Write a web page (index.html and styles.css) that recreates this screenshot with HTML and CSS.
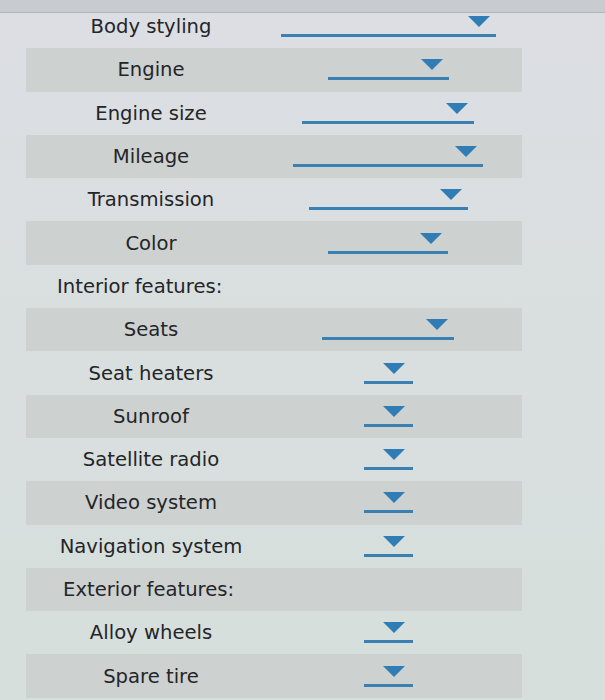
FILE: index.html
```html
<!DOCTYPE html>
<html lang="en">
<head>
<meta charset="utf-8">
<title>Vehicle features</title>
<link rel="stylesheet" href="styles.css">
</head>
<body>
<div class="page">
  <div class="list">
    <div class="row"><span class="label">Body styling</span><span class="select w-body"></span></div>
    <div class="row alt"><span class="label">Engine</span><span class="select w-engine"></span></div>
    <div class="row"><span class="label">Engine size</span><span class="select w-size"></span></div>
    <div class="row alt"><span class="label">Mileage</span><span class="select w-mileage"></span></div>
    <div class="row"><span class="label">Transmission</span><span class="select w-trans"></span></div>
    <div class="row alt"><span class="label">Color</span><span class="select w-color"></span></div>
    <div class="row"><span class="label head">Interior features:</span></div>
    <div class="row alt"><span class="label">Seats</span><span class="select w-seats"></span></div>
    <div class="row"><span class="label">Seat heaters</span><span class="select small"></span></div>
    <div class="row alt"><span class="label">Sunroof</span><span class="select small"></span></div>
    <div class="row"><span class="label">Satellite radio</span><span class="select small"></span></div>
    <div class="row alt"><span class="label">Video system</span><span class="select small"></span></div>
    <div class="row"><span class="label">Navigation system</span><span class="select small"></span></div>
    <div class="row alt"><span class="label head ext">Exterior features:</span></div>
    <div class="row"><span class="label">Alloy wheels</span><span class="select small"></span></div>
    <div class="row alt"><span class="label">Spare tire</span><span class="select small"></span></div>
  </div>
</div>
</body>
</html>
```
FILE: styles.css
```css
html, body {
  margin: 0;
  padding: 0;
}

body {
  width: 605px;
  height: 700px;
  overflow: hidden;
  font-family: "DejaVu Sans", Verdana, sans-serif;
  color: #242528;
}

.page {
  height: 700px;
  background:
    linear-gradient(#c8cbd0 0, #c8cbd0 12px, #b3b6ba 12px, #b3b6ba 13px, transparent 13px),
    linear-gradient(#dcdee3, #d9dfdf 50%, #d6dfdc);
}

.list {
  padding-top: 5px;
}

.row {
  display: grid;
  grid-template-columns: 250px 224px 1fr;
  align-items: center;
  width: 496px;
  height: 43.3px;
  margin-left: 26px;
}

.row.alt {
  background: #cdd1d0;
}

.label {
  font-size: 19.6px;
  text-align: center;
  white-space: nowrap;
}

.label.head {
  text-align: left;
  padding-left: 31px;
}

.label.ext {
  padding-left: 37px;
}

.select {
  justify-self: center;
  display: flex;
  justify-content: flex-end;
  align-items: flex-start;
  height: 18px;
  padding-right: 6px;
  border-bottom: 3px solid #3a80b3;
  box-sizing: content-box;
}

.select::after {
  content: "";
  width: 0;
  height: 0;
  border-left: 11.5px solid transparent;
  border-right: 11.5px solid transparent;
  border-top: 11px solid #2f7db4;
}

.w-body { width: 209px; }
.w-engine { width: 115px; }
.w-size { width: 166px; }
.w-mileage { width: 184px; }
.w-trans { width: 153px; }
.w-color { width: 114px; }
.w-seats { width: 126px; }

.select.small {
  width: 41px;
  padding-right: 8px;
}
```
